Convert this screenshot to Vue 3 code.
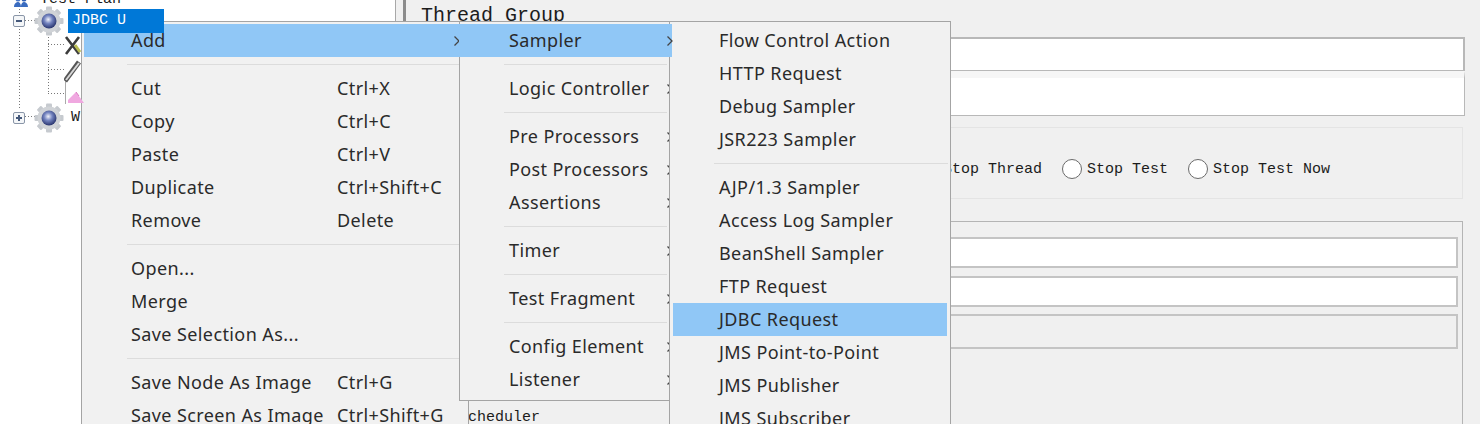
<script setup>
const menu1 = [
  { label: 'Add', arrow: true, active: true }, { sep: true },
  { label: 'Cut', key: 'Ctrl+X' }, { label: 'Copy', key: 'Ctrl+C' }, { label: 'Paste', key: 'Ctrl+V' },
  { label: 'Duplicate', key: 'Ctrl+Shift+C' }, { label: 'Remove', key: 'Delete' }, { sep: true },
  { label: 'Open...' }, { label: 'Merge' }, { label: 'Save Selection As...' }, { sep: true },
  { label: 'Save Node As Image', key: 'Ctrl+G' }, { label: 'Save Screen As Image', key: 'Ctrl+Shift+G' }
]
const menu2 = [
  { label: 'Sampler', arrow: true, active: true }, { sep: true },
  { label: 'Logic Controller', arrow: true }, { sep: true },
  { label: 'Pre Processors', arrow: true }, { label: 'Post Processors', arrow: true }, { label: 'Assertions', arrow: true }, { sep: true },
  { label: 'Timer', arrow: true }, { sep: true },
  { label: 'Test Fragment', arrow: true }, { sep: true },
  { label: 'Config Element', arrow: true }, { label: 'Listener', arrow: true }
]
const menu3 = [
  { label: 'Flow Control Action' }, { label: 'HTTP Request' }, { label: 'Debug Sampler' }, { label: 'JSR223 Sampler' }, { sep: true },
  { label: 'AJP/1.3 Sampler' }, { label: 'Access Log Sampler' }, { label: 'BeanShell Sampler' }, { label: 'FTP Request' },
  { label: 'JDBC Request', active: true }, { label: 'JMS Point-to-Point' }, { label: 'JMS Publisher' }, { label: 'JMS Subscriber' }
]
const menus = [
  { cls: 'm1', items: menu1 },
  { cls: 'm2', items: menu2 },
  { cls: 'm3', items: menu3 }
]
const teeth = [0, 45, 90, 135, 180, 225, 270, 315]
</script>

<template>
  <div class="screen">
    <aside class="tree">
      <div class="node first">
        <svg class="plan" viewBox="0 0 16 12"><circle cx="5" cy="3" r="2.500" fill="#4a78c8" /><circle cx="11" cy="3" r="2.500" fill="#2f5fb4" /><path d="M1 11c0-4 3-5 4-5s3 1 3 5zM8 11c0-4 2-5 3-5s4 1 4 5z" fill="#3a6cc0" /></svg>
        <span class="mono">Test Plan</span>
      </div>
      <div class="node">
        <span class="box"><i class="h"></i></span>
        <svg class="gear" viewBox="0 0 30 30">
          <rect v-for="t in teeth" :key="t" x="12" y="0.500" width="6" height="6" rx="1" fill="#c6cacf" :transform="`rotate(${t} 15 15)`" />
          <circle cx="15" cy="15" r="11.500" fill="#d0d3d7" />
          <circle cx="15" cy="15" r="7.500" fill="url(#orb)" />
          <defs>
            <radialGradient id="orb" cx="0.45" cy="0.4" r="0.6">
              <stop offset="0" stop-color="#f0f2fa" /><stop offset="0.45" stop-color="#7484c0" /><stop offset="1" stop-color="#28346e" />
            </radialGradient>
          </defs>
        </svg>
        <span class="selected mono">JDBC U</span>
      </div>
      <div class="node child">
        <svg class="tool" viewBox="0 0 18 24"><path d="M2 3l13 17M15 3L2 20" stroke="#3c3c3c" stroke-width="2.600" fill="none" /><path d="M11 11l5 7" stroke="#b8bc50" stroke-width="3" /></svg>
      </div>
      <div class="node child">
        <svg class="tool" viewBox="0 0 18 24"><path d="M1 22L15 3" stroke="#555" stroke-width="5" /><path d="M2 21L15 4" stroke="#d8d8d8" stroke-width="2" /></svg>
      </div>
      <div class="node child short">
        <svg class="pink" viewBox="0 0 16 11"><path d="M0 11V8L8 0l8 11z" fill="#f0a8e0" /><path d="M8 0l3 4" stroke="#d878c0" /></svg>
      </div>
      <div class="node">
        <span class="box"><i class="h"></i><i class="v"></i></span>
        <svg class="gear" viewBox="0 0 30 30">
          <rect v-for="t in teeth" :key="t" x="12" y="0.500" width="6" height="6" rx="1" fill="#c6cacf" :transform="`rotate(${t} 15 15)`" />
          <circle cx="15" cy="15" r="11.500" fill="#d0d3d7" />
          <circle cx="15" cy="15" r="7.500" fill="url(#orb)" />
        </svg>
        <span class="plain mono">W</span>
      </div>
      <svg class="links" width="100" height="130">
        <path d="M19.500 3V15M19.500 26V110M25 20.500H36M25 116.500H36M48.500 34V93M48 44.500H64M48 69.500H64M48 93.500H64" stroke="#777" stroke-dasharray="1 2" fill="none" />
        <path d="M65.500 80V104" stroke="#aaa" fill="none" />
      </svg>
    </aside>
    <div class="divider"></div>
    <main class="panel">
      <h1 class="title mono">Thread Group</h1>
      <div class="input name"></div>
      <div class="input comments"></div>
      <section class="errors mono">
        <label class="radio"><i></i>Stop Thread</label>
        <label class="radio"><i></i>Stop Test</label>
        <label class="radio"><i></i>Stop Test Now</label>
      </section>
      <section class="props">
        <div class="input field"></div>
        <div class="input field"></div>
        <div class="input field blank"></div>
        <div class="sched mono">Scheduler</div>
      </section>
    </main>
    <nav v-for="m in menus" :key="m.cls" class="menu" :class="m.cls">
      <template v-for="(it, i) in m.items" :key="i">
        <div v-if="it.sep" class="sep"></div>
        <div v-else class="row" :class="{ active: it.active }">
          <span class="label">{{ it.label }}</span>
          <span v-if="it.key" class="key">{{ it.key }}</span>
          <svg v-if="it.arrow" class="chev" viewBox="0 0 8 12"><path d="M1.500 1.500L6 6l-4.500 4.500" fill="none" stroke="#444" stroke-width="1.300" /></svg>
        </div>
      </template>
    </nav>
  </div>
</template>

<style scoped>
.screen { position: relative; display: flex; width: 1480px; height: 424px; overflow: hidden; background: #f0f0f0; }
.mono { font-family: "Liberation Mono", monospace; color: #1c1c1c; }
.tree { position: relative; width: 395px; height: 424px; background: #fff; border-right: 1px solid #a8a8a8; flex: none; }
.links { position: absolute; left: 0; top: 0; }
.node { display: flex; align-items: center; height: 25px; padding-left: 13px; position: relative; z-index: 1; }
.node.first { margin-top: -16px; height: 24px; font-size: 15px; align-items: flex-end; }
.plan { width: 16px; height: 12px; flex: none; margin-bottom: 0; margin-right: 11px; }
.node.short { height: 22px; align-items: flex-start; padding-top: 11px; box-sizing: border-box; }
.node.child { padding-left: 64px; }
.box { position: relative; width: 12px; height: 12px; border: 1px solid #8a96a8; background: #f4f6f8; box-sizing: border-box; border-radius: 2px; flex: none; }
.box .h { position: absolute; left: 2px; right: 2px; top: 4px; height: 2px; background: #44587a; }
.box .v { position: absolute; top: 2px; bottom: 2px; left: 4px; width: 2px; background: #44587a; }
.gear { width: 30px; height: 30px; margin-left: 9px; flex: none; }
.selected { margin-left: 4px; width: 96px; height: 24px; line-height: 24px; background: #0078d7; color: #fff; font-size: 15px; padding-left: 4px; box-sizing: border-box; }
.plain { margin-left: 7px; font-size: 15px; }
.tool { width: 18px; height: 24px; flex: none; }
.pink { width: 16px; height: 11px; margin-left: 4px; margin-top: -2px; }
.divider { width: 3px; height: 424px; margin-left: 7px; background: #8c8c8c; flex: none; }
.panel { flex: 1; min-width: 0; padding-right: 15px; box-sizing: border-box; }
.title { margin: 0; height: 37px; padding: 4px 0 0 15px; box-sizing: border-box; font-size: 20px; font-weight: 400; line-height: 24px; }
.input { box-sizing: border-box; background: #fff; border: 1px solid #b8b8b8; }
.name { height: 34px; border-width: 2px 2px 1px 0; }
.comments { height: 45px; border-top: 7px solid #f6f6f6; border-left: 0; }
.errors { height: 72px; margin-top: 11px; padding-left: 511px; border: 1px solid #e4e4e4; display: flex; align-items: center; gap: 20px; box-sizing: border-box; font-size: 15px; padding-top: 12px; margin-right: 2px; }
.radio { display: flex; align-items: center; gap: 5px; }
.radio i { width: 20px; height: 20px; border: 1.500px solid #6a6a6a; border-radius: 50%; background: #fff; box-sizing: border-box; margin-top: -1px; }
.props { margin-top: 22px; margin-right: 2px; border: 1px solid #b4b4b4; border-bottom: 0; padding: 15px 4px 0 0; height: 210px; box-sizing: border-box; }
.field { height: 31px; border: 2px solid #c4c4c4; border-left: 0; margin-bottom: 8px; }
.field.blank { height: 35px; margin-top: -1px; background: #f0f0f0; }
.sched { font-size: 15px; margin-top: 60px; padding-left: 52px; line-height: 18px; }
.menu { position: absolute; top: 21px; background: #f1f1f1; border: 1px solid #a4a4a4; box-sizing: border-box; padding: 2px; font-family: "Noto Sans", sans-serif; font-size: 18px; letter-spacing: 0.4px; color: #2a2a2a; }
.m1 { left: 81px; width: 388px; height: 420px; }
.m2 { left: 459px; width: 211px; height: 380px; }
.m3 { left: 669px; width: 282px; height: 420px; z-index: 3; }
.row { position: relative; display: flex; align-items: center; height: 33px; line-height: 33px; white-space: nowrap; }
.row.active { background: #90c7f6; }
.m1 .row { padding-left: 47px; }
.m2 .row { padding-left: 47px; }
.m3 .row { padding-left: 47px; }
.m2 .row.active { margin-left: -3px; margin-right: -5px; padding-left: 50px; z-index: 4; }
.m3 .row.active { margin-right: 1px; margin-left: 1px; padding-left: 46px; }
.key { position: absolute; left: 253px; top: 0; }
.chev { position: absolute; top: 11px; width: 8px; height: 12px; }
.m1 .chev { left: 369px; }
.m2 .row .chev { left: 204px; }
.m2 .row.active .chev { left: 207px; }
.sep { height: 15px; display: flex; align-items: center; }
.sep::after { content: ""; display: block; flex: 1; height: 1px; background: #dcdcdc; }
.m1 .sep { padding-left: 43px; }
.m2 .sep { padding-left: 42px; }
.m3 .sep { padding-left: 42px; }
</style>

<style>
html, body { margin: 0; background: #f0f0f0; }
</style>
